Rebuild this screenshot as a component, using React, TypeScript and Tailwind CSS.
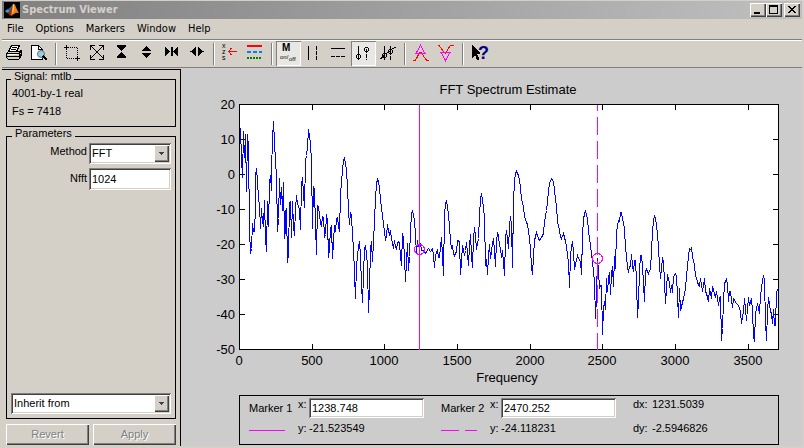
import React, { useState } from "react";
import clsx from "clsx";

// plot area, in svg units
const PLOT_W = 539;
const PLOT_H = 245;

const yTicks = [20, 10, 0, -10, -20, -30, -40, -50];
const xTicks = [0, 500, 1000, 1500, 2000, 2500, 3000, 3500];

const xPos = (freq: number) => Math.round((freq * PLOT_W) / 3709);
const yPos = (db: number) => Math.round((20 - db) * 3.5);

const trace =
  "0,24 1,24 2,54 3,73 4,27 5,53 6,30 7,87 8,30 9,42 10,125 11,149 12,144 13,119 14,127 15,123 15,127 16,102 16,71 17,64 18,77 19,94 20,101 21,124 22,104 23,119 24,111 24,122 25,96 26,134 27,147 28,97 29,122 30,79 31,71 32,86 32,67 33,34 34,17 35,37 36,58 37,71 38,127 39,114 40,74 41,100 42,83 43,106 44,78 45,134 46,106 46,129 47,104 48,158 49,149 50,99 51,97 52,133 53,97 54,121 55,131 56,104 57,91 58,99 59,102 60,105 61,125 62,81 63,73 64,90 65,103 66,57 67,51 68,42 69,25 70,31 71,39 72,57 73,124 74,82 75,85 76,121 77,150 78,101 79,102 80,110 81,119 82,121 83,112 84,113 85,132 86,130 87,110 88,116 89,153 90,144 91,124 92,121 93,154 94,137 95,121 96,127 97,114 98,113 99,121 100,127 101,91 102,77 103,66 104,56 105,54 106,58 107,67 108,82 109,106 110,120 111,108 112,111 113,132 114,142 115,171 116,194 117,161 118,152 119,142 120,137 121,152 122,181 123,198 124,171 125,144 126,141 127,149 128,161 129,208 130,184 131,144 132,137 133,157 134,137 135,116 136,94 137,79 138,75 139,77 140,84 141,94 142,104 143,111 144,119 145,127 146,136 147,131 148,120 149,127 150,130 151,126 152,134 153,139 154,144 155,136 156,142 157,145 158,138 159,137 160,139 161,151 162,161 163,129 164,134 165,154 166,177 167,157 168,139 169,166 170,152 171,126 172,109 173,107 174,110 175,116 176,131 177,149 178,136 179,142 " +
  "181,139 182,146 184,146 186,149 187,147 189,144 191,147 193,144 194,151 195,163 196,151 198,145 199,153 200,153 201,142 202,133 203,151 204,171 205,111 206,99 207,97 208,102 209,111 210,122 211,136 212,144 213,141 214,149 215,151 217,147 218,136 220,137 221,170 222,157 223,141 225,151 226,146 227,138 228,149 229,161 230,141 231,130 232,151 233,163 234,134 235,123 236,131 237,145 238,139 239,134 240,112 241,94 242,89 243,95 244,104 245,112 246,161 247,155 248,170 249,151 250,140 251,154 252,147 253,139 254,134 255,146 256,162 257,137 258,129 259,131 260,141 261,144 262,153 263,146 265,171 266,134 267,126 268,134 269,144 270,122 271,112 272,121 273,163 274,97 275,77 276,69 277,67 279,71 280,75 281,84 282,95 284,102 285,112 287,118 288,120 289,126 290,134 291,144 292,162 293,170 294,152 295,136 297,128 299,134 300,136 302,133 304,129 305,117 307,106 309,87 310,79 312,74 314,77 315,86 317,102 318,117 320,126 321,132 322,134 324,129 326,137 327,141 328,151 329,157 330,183 331,152 332,142 333,137 334,147 335,165 336,160 338,151 339,154 341,157 342,170 343,131 344,114 346,106 348,114 349,127 350,134 351,141 352,149 353,157 354,167 355,177 356,214 357,191 358,154 359,167 360,184 361,181 362,181 363,230 364,204 365,197 366,205 367,174 368,187 369,174 370,168 371,190 " +
  "372,169 373,162 374,182 375,152 376,164 377,127 379,116 380,117 381,108 382,108 383,114 385,124 386,144 387,151 388,164 389,167 390,162 391,162 392,150 393,161 394,167 395,156 396,156 397,177 398,213 399,197 400,167 401,151 402,151 403,161 404,179 405,197 406,167 407,165 409,169 411,164 412,147 413,127 414,117 415,111 416,114 418,129 419,144 420,161 421,174 422,164 423,153 424,157 425,177 426,199 427,184 428,170 430,179 431,188 432,181 433,188 434,172 436,169 437,172 438,191 439,213 440,184 441,206 442,202 444,194 446,184 447,171 449,152 450,144 452,146 452,143 453,152 455,161 456,171 458,177 459,181 460,182 461,174 463,187 465,174 466,187 467,189 469,197 470,184 472,194 473,182 475,189 476,193 477,187 479,201 480,194 481,192 482,236 483,224 484,197 485,179 487,175 488,179 489,197 490,187 491,187 493,203 494,194 497,199 499,201 501,207 502,219 504,207 505,194 507,216 509,193 510,201 512,194 513,207 514,232 515,237 516,209 518,199 520,209 521,191 523,176 524,171 525,176 526,217 527,236 528,207 529,193 531,207 532,209 533,219 534,205 535,221 536,221 537,187 539,184";

const sunken =
  "shadow-[inset_1px_1px_0_#808080,inset_-1px_-1px_0_#ffffff,inset_2px_2px_0_#404040,inset_-2px_-2px_0_#d4d0c8]";
const raised =
  "shadow-[inset_1px_1px_0_#ffffff,inset_-1px_-1px_0_#404040,inset_-2px_-2px_0_#808080]";

interface ToolButtonProps {
  label: string;
  pressed?: boolean;
  onClick?: () => void;
  children: React.ReactNode;
}

const ToolButton: React.FC<ToolButtonProps> = ({ label, pressed, onClick, children }) => (
  <button
    type="button"
    aria-label={label}
    aria-pressed={pressed}
    onClick={onClick}
    className={clsx(
      "size-[25px] shrink-0",
      pressed && "bg-[#e9e7e3] shadow-[inset_1px_1px_0_#808080,inset_-1px_-1px_0_#ffffff]"
    )}
  >
    <svg
      viewBox="0 0 25 25"
      className="size-[25px]"
      fill="none"
      stroke="#000"
      shapeRendering="crispEdges"
    >
      {children}
    </svg>
  </button>
);

const ToolSeparator = () => (
  <div className="flex w-2 shrink-0 justify-center py-[2px]">
    <div className="w-[2px] border-l border-r border-l-[#808080] border-r-white" />
  </div>
);

// 5px ring used by the marker icons
const Ring: React.FC<{ x: number; y: number }> = ({ x, y }) => (
  <path
    transform={`translate(${x} ${y})`}
    d="M-1-2h3v1h-3zM-1 2h3v1h-3zM-2-1h1v3h-1zM2-1h1v3h-1z"
    fill="#000"
    stroke="none"
  />
);

const MatlabLogo = () => (
  <svg viewBox="0 0 16 16" className="size-4 shrink-0">
    <rect width="16" height="16" fill="#000" />
    <path d="M1 9 L4 7 L6 9 L3 11 Z" fill="#3fa0c8" />
    <path d="M4 7 Q7 6 9 2 L8 8 L6 10 Z" fill="#2468a8" />
    <path d="M3 11 L6 9 L9 2 L11 3 L12 7 L9 11 L6 14 Q5 11 3 11 Z" fill="#9c2c10" />
    <path d="M9 2 Q10 1 11 3 Q13 8 15 11 Q12 10 10 12 L7 14 Q8 8 9 2 Z" fill="#f08018" />
    <path d="M9 3 L10 2 L10 8 L8 12 Z" fill="#ffc850" />
  </svg>
);

const WindowButton: React.FC<{ label: string; children: React.ReactNode }> = ({
  label,
  children,
}) => (
  <button type="button" aria-label={label} className={clsx("h-[14px] w-4 bg-[#d4d0c8]", raised)}>
    <svg viewBox="0 0 16 14" className="h-[14px] w-4" shapeRendering="crispEdges">
      {children}
    </svg>
  </button>
);

const TitleBar = () => (
  <header className="flex h-[18px] items-center bg-linear-to-r from-[#808080] to-[#c0c0c0] pr-[2px] pl-[2px]">
    <MatlabLogo />
    <h1 className="ml-[2px] flex-1 font-['DejaVu_Sans_Condensed','DejaVu_Sans',sans-serif] text-[11px] font-bold text-[#d4d0c8]">
      Spectrum Viewer
    </h1>
    <WindowButton label="Minimize">
      <rect x="4" y="9" width="6" height="2" />
    </WindowButton>
    <WindowButton label="Maximize">
      <path d="M3 2h9v9H3z M4 4v6h7V4z" fillRule="evenodd" />
    </WindowButton>
    <div className="w-[2px]" />
    <WindowButton label="Close">
      <path d="M4 3h2v1h1v1h2V4h1V3h2v1h-1v1h-1v1H9v1h1v1h1v1h1v1h-2V9H9V8H7v1H6v1H4V9h1V8h1V7h1V6H6V5H5V4H4z" />
    </WindowButton>
  </header>
);

const menus = ["File", "Options", "Markers", "Window", "Help"];

const MenuBar = () => (
  <nav className="flex h-5 items-center gap-3 pl-[5px] font-['DejaVu_Sans_Condensed','DejaVu_Sans',sans-serif] text-[11px]">
    {menus.map((m) => (
      <button key={m} type="button">
        {m}
      </button>
    ))}
  </nav>
);

const Toolbar = () => {
  const [markersOn, setMarkersOn] = useState(true);
  const [mode, setMode] = useState("track");

  return (
    <div
      role="toolbar"
      className="flex h-[29px] border-y border-[#808080] shadow-[inset_0_1px_0_#ffffff,0_1px_0_#ffffff] pt-px"
    >
      <ToolButton label="Print">
        <path d="M9.500 4.500h8l-3 6h-8z" fill="#fff" />
        <path d="M10 6.500h5M9 8.500h5" />
        <path d="M4.500 12.500l2-2h11l2-1v5l-3 4h-10l-2-2z" fill="#d4d0c8" />
        <path d="M5 12.500h12l2-2M5 15.500h12l2-2M17 13v5M6 18.500h10" />
        <path d="M6 13.500h9" stroke="#fff" />
        <path d="M12 14.500h3" stroke="#e0d000" />
      </ToolButton>
      <ToolButton label="Print Preview">
        <path d="M4.500 4.500h7l4 4v10h-11z" fill="#fff" />
        <path d="M11.500 4.500v4h4" />
        <circle cx="14" cy="13" r="3.500" fill="#8ed0e4" stroke="#707070" shapeRendering="auto" />
        <path d="M16 15l4 4" strokeWidth="2" />
      </ToolButton>
      <ToolSeparator />
      <ToolButton label="Mouse Zoom">
        <path d="M4 6.500h5M6.500 4v5M15 17.500h5M17.500 15v5" />
        <path d="M10 6.500h8M6.500 10v8" strokeDasharray="1 1" />
        <path d="M7 17.500h8M17.500 7v8" strokeDasharray="1 1" />
      </ToolButton>
      <ToolButton label="Full View">
        <path d="M5.500 9V4.500H10M14 4.500h4.500V9M18.500 14v4.500H14M10 18.500H5.500V14" />
        <path d="M6 5l13 13M18 5L5 18" />
      </ToolButton>
      <ToolButton label="Zoom Out Y">
        <path d="M7 4h9v2h-1v1h-1v1h-1v1h-1v1h-1V9h-1V8H9V7H8V6H7zM7 17h9v-2h-1v-1h-1v-1h-1v-1h-1v-1h-1v1h-1v1H9v1H8v1H7z" fill="#000" stroke="none" />
      </ToolButton>
      <ToolButton label="Zoom In Y">
        <path d="M11 5h1v1h1v1h1v1h1v1h1v1H7V9h1V8h1V7h1V6h1zM7 12h9v1h-1v1h-1v1h-1v1h-1v1h-1v-1h-1v-1H9v-1H8v-1H7z" fill="#000" stroke="none" />
      </ToolButton>
      <ToolButton label="Zoom Out X">
        <path d="M5 6h1v1h1v1h1v1h1v1h1v1H9v1H8v1H7v1H6v1H5zM11 6h2v9h-2zM18 6h-1v1h-1v1h-1v1h-1v1h-1v1h1v1h1v1h1v1h1v1h1z" fill="#000" stroke="none" />
      </ToolButton>
      <ToolButton label="Zoom In X">
        <path d="M10 6h1v9h-1v-1H9v-1H8v-1H7v-1H5v-1h2V9h1V8h1V7h1zM13 6h1v1h1v1h1v1h1v1h2v1h-2v1h-1v1h-1v1h-1v1h-1z" fill="#000" stroke="none" />
      </ToolButton>
      <ToolSeparator />
      <ToolButton label="Select Trace">
        <g fill="#000" stroke="none" fontFamily="Liberation Sans" fontSize="7">
          <text x="4" y="7">x</text>
          <text x="4" y="13">z</text>
          <text x="4" y="19">s</text>
        </g>
        <path d="M10 10.500h9M13.500 7l-3 3.500l3 3.500" stroke="#f00" />
      </ToolButton>
      <ToolButton label="Line Properties">
        <path d="M4 5h15" stroke="#f00" strokeWidth="2" />
        <path d="M4 11h15" stroke="#0080ff" strokeWidth="2" strokeDasharray="4 2" />
        <path d="M4 17h15" stroke="#008000" strokeWidth="2" strokeDasharray="2 1" />
      </ToolButton>
      <ToolSeparator />
      <ToolButton
        label="Toggle Markers"
        pressed={markersOn}
        onClick={() => setMarkersOn(!markersOn)}
      >
        <g fill="#000" stroke="none" fontFamily="Liberation Sans">
          <text x="6" y="10" fontSize="10" fontWeight="bold">M</text>
          <text x="4" y="18" fontSize="6">on/</text>
          <text x="13" y="20" fontSize="6">off</text>
        </g>
      </ToolButton>
      <ToolButton label="Vertical Markers" onClick={() => setMode("vertical")} pressed={mode === "vertical"}>
        <path d="M7.500 5v14" />
        <path d="M15.500 5v14" strokeDasharray="4 1" />
      </ToolButton>
      <ToolButton label="Horizontal Markers" onClick={() => setMode("horizontal")} pressed={mode === "horizontal"}>
        <path d="M5 7.500h14" />
        <path d="M5 15.500h14" strokeDasharray="4 1" />
      </ToolButton>
      <ToolButton label="Track Markers" onClick={() => setMode("track")} pressed={mode === "track"}>
        <path d="M7.500 5v14" />
        <Ring x={7} y={15} />
        <Ring x={15} y={8} />
        <path d="M15.500 8v11" strokeDasharray="4 1" />
      </ToolButton>
      <ToolButton label="Slope Markers" onClick={() => setMode("slope")} pressed={mode === "slope"}>
        <path d="M8.500 5v14" />
        <path d="M14.500 5v14" strokeDasharray="4 1" />
        <Ring x={8} y={14} />
        <Ring x={14} y={10} />
        <path d="M4 18l3-2l2-3l4-2l3-3l4-2" />
      </ToolButton>
      <ToolSeparator />
      <ToolButton label="Peaks">
        <path d="M4 19.500h2l2-3l3-5.500h1l3 5l3 3.500h2" stroke="#f00" />
        <path d="M11.500 4L7 12.500h9z" stroke="#f0f" />
      </ToolButton>
      <ToolButton label="Valleys">
        <path d="M4 4.500h1l3 4l3 3.500h1l2-4l2-3l4-.500" stroke="#f00" />
        <path d="M11.500 19.500L7 11.500h9z" stroke="#f0f" />
      </ToolButton>
      <ToolSeparator />
      <ToolButton label="Help">
        <text x="11" y="18" fontFamily="Liberation Sans" fontSize="18" fontWeight="bold" fill="#000080" stroke="none">
          ?
        </text>
        <path d="M5 4l8 8v1h-3l2 4v2h-2l-2-5l-3 3z" fill="#000" stroke="none" />
      </ToolButton>
    </div>
  );
};

interface DropDownProps {
  id: string;
  options: string[];
  className?: string;
  "aria-label"?: string;
}

const DropDown: React.FC<DropDownProps> = ({ id, options, className, ...rest }) => (
  <div className={clsx("relative h-[21px]", className)}>
    <select id={id} {...rest} className={clsx("h-full w-full appearance-none bg-white pr-5 pl-[3px]", sunken)}>
      {options.map((o) => (
        <option key={o}>{o}</option>
      ))}
    </select>
    <span
      className={clsx(
        "pointer-events-none absolute top-[2px] right-[2px] bottom-[2px] flex w-[15px] items-center justify-center bg-[#d4d0c8]",
        raised
      )}
    >
      <svg viewBox="0 0 5 3" className="h-[3px] w-[5px]" shapeRendering="crispEdges">
        <path d="M0 0h5v1H4v1H3v1H2V2H1V1H0z" fill="#404040" />
      </svg>
    </span>
  </div>
);

const pushButton =
  "h-[21px] flex-1 text-[#808080] [text-shadow:1px_1px_0_#ffffff]";

const SidePanel = () => {
  const [nfft, setNfft] = useState("1024");

  return (
    <aside className="mt-px flex w-[179px] shrink-0 flex-col border-t border-r border-black bg-[#d4d0c8] pr-1 pl-1">
      <fieldset className="flex h-[57px] flex-col gap-[6px] border border-black pl-[5px]">
        <legend className="-ml-px px-[3px] pb-[6px] leading-3">Signal: mtlb</legend>
        <p className="-mt-[1px] leading-3">4001-by-1 real</p>
        <p className="leading-3">Fs = 7418</p>
      </fieldset>
      <fieldset className="flex flex-1 flex-col border border-black">
        <legend className="ml-[5px] px-[3px] pb-[6px] leading-3">Parameters</legend>
        <div className="-mt-[2px] flex flex-1 flex-col px-1">
          <div className="grid grid-cols-[76px_1fr] gap-x-[2px] gap-y-1">
            <label htmlFor="method" className="text-right leading-4">
              Method
            </label>
            <DropDown id="method" options={["FFT", "Burg", "Welch", "MTM", "MUSIC"]} />
            <label htmlFor="nfft" className="pt-[2px] text-right leading-4">
              Nfft
            </label>
            <input
              id="nfft"
              value={nfft}
              onChange={(e) => setNfft(e.target.value)}
              className={clsx("h-[22px] w-full min-w-0 bg-white px-[3px]", sunken)}
            />
          </div>
          <DropDown
            id="inherit"
            aria-label="Inherit from"
            options={["Inherit from"]}
            className="mt-auto mb-1"
          />
        </div>
      </fieldset>
      <div className="flex gap-1 pt-[5px] pb-px">
        <button type="button" disabled className={clsx(pushButton, raised)}>
          Revert
        </button>
        <button type="button" disabled className={clsx(pushButton, raised)}>
          Apply
        </button>
      </div>
    </aside>
  );
};

const SpectrumChart = () => (
  <svg
    viewBox="0 0 621 327"
    className="h-auto w-full"
    fontFamily="Liberation Sans, Arial, sans-serif"
    fontSize="13"
    role="img"
    aria-label="FFT Spectrum Estimate"
  >
    <text x="327" y="26" textAnchor="middle">
      FFT Spectrum Estimate
    </text>
    <g transform="translate(58.5 36.5)" shapeRendering="crispEdges" fill="none">
      <rect width={PLOT_W} height={PLOT_H} fill="#fff" stroke="#000" />
      {xTicks.map((t) => (
        <path key={t} d={`M${xPos(t)} 0v5M${xPos(t)} ${PLOT_H}v-6`} stroke="#000" />
      ))}
      {yTicks.map((t) => (
        <path key={t} d={`M0 ${yPos(t)}h5M${PLOT_W} ${yPos(t)}h-6`} stroke="#000" />
      ))}
      <polyline points={trace} stroke="#00f" />
      <g stroke="#f0f">
        <path d={`M180 0V${PLOT_H}`} />
        <circle cx="180" cy="145" r="5" />
        <path d={`M358 0V${PLOT_H}`} strokeDasharray="18 6" strokeDashoffset="12" />
        <circle cx="358" cy="154" r="5" />
      </g>
    </g>
    {xTicks.map((t) => (
      <text key={t} x={58 + xPos(t)} y="297" textAnchor="middle">
        {t}
      </text>
    ))}
    {yTicks.map((t) => (
      <text key={t} x="54" y={41 + yPos(t)} textAnchor="end">
        {t}
      </text>
    ))}
    <text x="326" y="314" textAnchor="middle">
      Frequency
    </text>
  </svg>
);

interface MarkerProps {
  n: number;
  x: string;
  y: string;
  dashed?: boolean;
}

const MarkerReadout: React.FC<MarkerProps> = ({ n, x, y, dashed }) => {
  const [value, setValue] = useState(x);

  return (
    <div className="grid grid-cols-[49px_11px_115px] grid-rows-[21px_20px]">
      <span className="pt-[2px] leading-4">Marker {n}</span>
      <label htmlFor={`marker${n}`} className="leading-3" aria-label={`Marker ${n} x`}>
        x:
      </label>
      <input
        id={`marker${n}`}
        value={value}
        onChange={(e) => setValue(e.target.value)}
        className={clsx("h-5 w-full min-w-0 bg-white px-[3px]", sunken)}
      />
      <svg viewBox="0 0 36 20" className="h-5 w-9" shapeRendering="crispEdges">
        <path d="M0 11.500h36" stroke="#f0f" strokeDasharray={dashed ? "18 6" : undefined} />
      </svg>
      <span className="pt-px leading-4">y:</span>
      <span className="pt-px leading-4">{y}</span>
    </div>
  );
};

const MarkerPanel = () => (
  <section className="mr-[23px] ml-[58px] flex h-[50px] gap-[17px] border border-black pt-[2px] pl-[9px]">
    <MarkerReadout n={1} x="1238.748" y="-21.523549" />
    <MarkerReadout n={2} x="2470.252" y="-24.118231" dashed />
    <dl className="grid grid-cols-[19px_auto] grid-rows-[21px_20px]">
      <dt className="leading-3">dx:</dt>
      <dd className="leading-3">1231.5039</dd>
      <dt className="pt-px leading-4">dy:</dt>
      <dd className="pt-px leading-4">-2.5946826</dd>
    </dl>
  </section>
);

export default function App() {
  return (
    <div className="flex min-h-screen flex-col bg-[#d4d0c8] px-[2px] pt-px pb-[2px] font-['Liberation_Sans',Arial,sans-serif] text-[11px] text-black">
      <TitleBar />
      <MenuBar />
      <Toolbar />
      <main className="flex flex-1 bg-[#cccccc]">
        <SidePanel />
        <div className="flex min-w-0 flex-1 flex-col">
          <SpectrumChart />
          <MarkerPanel />
        </div>
      </main>
    </div>
  );
}
